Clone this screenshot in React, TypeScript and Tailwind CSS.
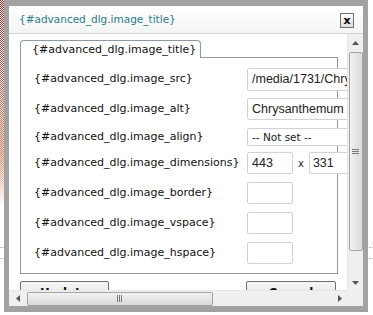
import React from "react";

const font = { fontFamily: '"DejaVu Sans", Verdana, sans-serif' };
const inFont = { fontFamily: '"Liberation Sans", Arial, sans-serif' };

function Checker({ w, h }: { w: number; h: number }) {
  return (
    <svg width={w} height={h} className="block">
      <defs>
        <pattern id={`ck${w}${h}`} width="2" height="2" patternUnits="userSpaceOnUse">
          <rect width="2" height="2" fill="#f4e8e8" />
          <rect width="1" height="1" fill="#9b2a2a" />
          <rect x="1" y="1" width="1" height="1" fill="#9b2a2a" />
        </pattern>
        <linearGradient id={`fd${w}${h}`} x1="0" y1="0" x2="0" y2="1">
          <stop offset="0" stopColor="#fff" stopOpacity="0" />
          <stop offset="0.75" stopColor="#f3c9a0" stopOpacity="0.6" />
          <stop offset="1" stopColor="#fff" stopOpacity="1" />
        </linearGradient>
      </defs>
      <rect width={w} height={h} fill={`url(#ck${w}${h})`} />
      {h > 50 && <rect width={w} height={h} fill={`url(#fd${w}${h})`} />}
    </svg>
  );
}

function Field({ label, children, h, mt }: { label: string; children?: React.ReactNode; h: string; mt: string }) {
  return (
    <div className={`flex items-center ${h} ${mt}`}>
      <div className="w-[213px] shrink-0 text-[11px] text-[#111] whitespace-nowrap">{label}</div>
      <div className="flex items-center">{children}</div>
    </div>
  );
}

const inputCls = "border border-[#cfd3d6] rounded-[2px] bg-white";

export default function App() {
  return (
    <div className="relative w-[373px] h-[315px] bg-white overflow-hidden" style={font}>
      {/* desktop background bits */}
      <div className="absolute left-0 top-0">
        <Checker w={5} h={205} />
      </div>
      <div className="absolute left-0 top-0">
        <Checker w={238} h={3} />
      </div>
      <div className="absolute left-0 top-[247px] w-[4px] border-t border-dotted border-[#bbb]" />
      <div className="absolute left-0 top-[258px] w-[4px] border-t border-dotted border-[#bbb]" />
      <div className="absolute left-[369px] top-[247px] w-[4px] border-t border-dotted border-[#bbb]" />
      <div className="absolute left-[369px] top-[258px] w-[4px] border-t border-dotted border-[#bbb]" />

      {/* window frame */}
      <div className="absolute left-[4px] top-0 w-[364px] h-[312px] bg-[#a2a2a2] pt-[6px] pb-[6px] px-[5px]">
        <div className="w-full h-full bg-white flex flex-col">
          {/* title bar */}
          <div className="h-[28px] shrink-0 flex items-center justify-between pl-[10px] pr-[9px] border-b border-[#d4d4d4] bg-gradient-to-b from-white to-[#f4f4f4]">
            <span className="text-[10.5px] text-[#2a7d8e]">{"{#advanced_dlg.image_title}"}</span>
            <div className="mt-[2px] w-[14px] h-[15px] border border-[#6f6f6f] bg-gradient-to-b from-white to-[#dcdcdc] flex items-center justify-center text-[11px] font-bold leading-none text-black pb-[1px]">
              x
            </div>
          </div>

          {/* body */}
          <div className="flex-1 flex min-h-0">
            {/* content */}
            <div className="flex-1 overflow-hidden relative">
              <div className="pl-[11px] pt-[6px] w-[400px]">
                <div className="flex">
                  <div className="w-[181px] h-[18px] border border-[#8d9aa6] border-b-0 rounded-t-[4px] bg-white relative z-10 -mb-px pl-[11px] text-[11px] leading-[17px] text-[#111]">
                    {"{#advanced_dlg.image_title}"}
                  </div>
                </div>
                <div className="w-[318px] h-[217px] border border-[#8d9aa6] pl-[13px]">
                  <Field label="{#advanced_dlg.image_src}" h="h-[23px]" mt="mt-[10px]">
                    <div style={inFont} className={`${inputCls} w-[110px] h-[23px] pl-[4px] text-[12.5px] leading-[21px] text-[#222] whitespace-nowrap overflow-hidden`}>
                      /media/1731/Chrysanthemum.jpg
                    </div>
                  </Field>
                  <Field label="{#advanced_dlg.image_alt}" h="h-[22px]" mt="mt-[7px]">
                    <div style={inFont} className={`${inputCls} w-[110px] h-[22px] pl-[4px] text-[12.5px] leading-[20px] text-[#222] whitespace-nowrap overflow-hidden`}>
                      Chrysanthemum
                    </div>
                  </Field>
                  <Field label="{#advanced_dlg.image_align}" h="h-[18px]" mt="mt-[8px]">
                    <div className={`${inputCls} w-[110px] h-[18px] pl-[4px] text-[10.5px] leading-[16px] text-[#222] whitespace-nowrap`}>
                      -- Not set --
                    </div>
                  </Field>
                  <Field label="{#advanced_dlg.image_dimensions}" h="h-[22px]" mt="mt-[6px]">
                    <div style={inFont} className={`${inputCls} w-[46px] h-[22px] pl-[4px] text-[12.5px] leading-[20px] text-[#222]`}>443</div>
                    <span className="mx-[5px] text-[10px] text-[#222]">x</span>
                    <div style={inFont} className={`${inputCls} w-[46px] h-[22px] pl-[3px] text-[12.5px] leading-[20px] text-[#222]`}>331</div>
                  </Field>
                  <Field label="{#advanced_dlg.image_border}" h="h-[22px]" mt="mt-[8px]">
                    <div className={`${inputCls} w-[46px] h-[22px]`} />
                  </Field>
                  <Field label="{#advanced_dlg.image_vspace}" h="h-[22px]" mt="mt-[8px]">
                    <div className={`${inputCls} w-[46px] h-[22px]`} />
                  </Field>
                  <Field label="{#advanced_dlg.image_hspace}" h="h-[22px]" mt="mt-[8px]">
                    <div className={`${inputCls} w-[46px] h-[22px]`} />
                  </Field>
                </div>
                <div className="flex mt-[7px]">
                  <div className="w-[89px] h-[24px] border border-[#707070] rounded-[2px] bg-gradient-to-b from-[#f6f6f6] to-[#dddddd] text-[12px] font-bold text-center leading-[22px] text-[#111]">
                    Update
                  </div>
                  <div className="ml-[137px] w-[90px] h-[24px] border border-[#707070] rounded-[2px] bg-gradient-to-b from-[#f6f6f6] to-[#dddddd] text-[12px] font-bold text-center leading-[22px] text-[#111]">
                    Cancel
                  </div>
                </div>
              </div>
            </div>

            {/* vertical scrollbar */}
            <div className="w-[16px] shrink-0 bg-[#efefef] flex flex-col items-center border-l border-[#e6e6e6]">
              <div className="h-[17px] flex items-center justify-center">
                <svg width="7" height="4"><path d="M0 4 L3.5 0 L7 4 Z" fill="#555" /></svg>
              </div>
              <div className="w-[14px] h-[199px] mt-[1px] rounded-[2px] border border-[#a3a3a3] bg-gradient-to-r from-[#f2f2f2] to-[#d9d9d9] flex items-center justify-center">
                <svg width="7" height="6">
                  <path d="M0 0.5 H7 M0 2.5 H7 M0 4.5 H7" stroke="#777" strokeWidth="1" />
                </svg>
              </div>
              <div className="flex-1 flex items-end justify-center pb-[5px]">
                <svg width="7" height="4"><path d="M0 0 L3.5 4 L7 0 Z" fill="#555" /></svg>
              </div>
            </div>
          </div>

          {/* horizontal scrollbar */}
          <div className="h-[16px] shrink-0 flex">
            <div className="flex-1 bg-[#efefef] flex items-center border-t border-[#e6e6e6]">
              <div className="w-[17px] flex items-center justify-center">
                <svg width="4" height="7"><path d="M4 0 L0 3.5 L4 7 Z" fill="#555" /></svg>
              </div>
              <div className="w-[186px] h-[14px] ml-[1px] rounded-[2px] border border-[#a3a3a3] bg-gradient-to-b from-[#f2f2f2] to-[#d9d9d9] flex items-center justify-center">
                <svg width="6" height="7">
                  <path d="M0.5 0 V7 M2.5 0 V7 M4.5 0 V7" stroke="#777" strokeWidth="1" />
                </svg>
              </div>
              <div className="flex-1 flex items-center justify-end pr-[5px]">
                <svg width="4" height="7"><path d="M0 0 L4 3.5 L0 7 Z" fill="#555" /></svg>
              </div>
            </div>
            <div className="w-[16px] bg-[#efefef]" />
          </div>
        </div>
      </div>
    </div>
  );
}
